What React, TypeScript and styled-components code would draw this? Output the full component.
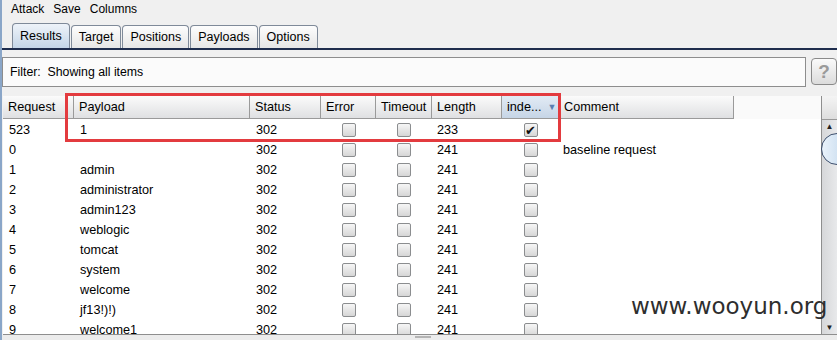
import styled, { createGlobalStyle } from "styled-components"

const Global = createGlobalStyle`
  html, body { margin: 0; padding: 0; overflow: hidden; background: #f0f0f0; }
  body { font-family: "Liberation Sans", Arial, sans-serif; font-size: 12px; color: #000; }
`

// Styles
const Window = styled.div`
  position: relative;
  width: 837px;
  height: 340px;
  box-sizing: border-box;
  border-left: 2px solid #8aa6c8;
  background: #f0f0f0;
  display: flex;
  flex-direction: column;
  overflow: hidden;
`
const MenuBar = styled.div`
  height: 17px;
  display: flex;
  align-items: center;
  gap: 9px;
  padding-left: 9px;
  font-size: 12px;
`
const TabStrip = styled.div`
  display: flex;
  align-items: flex-end;
  margin-top: 5px;
  padding-left: 10px;
  height: 26px;
  border-bottom: 2px solid #1f2d4d;
`
const Tab = styled.div<{ $active?: boolean }>`
  height: ${p => (p.$active ? 25 : 23)}px;
  box-sizing: border-box;
  padding: 0 7px;
  margin-right: 1px;
  display: flex;
  align-items: center;
  border: 1px solid #7f8a99;
  border-bottom: none;
  border-radius: 4px 4px 0 0;
  background: ${p =>
    p.$active
      ? "linear-gradient(#eef3f9, #c5d6e8)"
      : "linear-gradient(#fdfdfd, #e6e6e6)"};
  font-size: 12.5px;
`
const FilterRow = styled.div`
  display: flex;
  align-items: center;
  gap: 5px;
  margin-top: 6px;
  height: 31px;
`
const FilterBox = styled.div`
  width: 804px;
  height: 30px;
  box-sizing: border-box;
  border: 1px solid #8d8d8d;
  background: #fbfbfb;
  display: flex;
  align-items: center;
  padding-left: 7px;
  font-size: 12.3px;
  white-space: pre;
`
const HelpButton = styled.div`
  width: 26px;
  height: 27px;
  box-sizing: border-box;
  border: 1px solid #8a8a8a;
  border-radius: 4px;
  background: linear-gradient(#fafafa, #dcdcdc);
  color: #9a9a9a;
  font-size: 19px;
  font-weight: bold;
  display: flex;
  align-items: center;
  justify-content: center;
`
const TableArea = styled.div`
  flex: 1;
  display: flex;
  margin-top: 9px;
  margin-left: 1px;
  background: #fff;
  border-bottom: 1px solid #8e8e8e;
  overflow: hidden;
`
const TableBody = styled.div`
  flex: 1;
  overflow: hidden;
`
const cols = "71px 176px 71px 55px 56px 70px 57px 175px"
const HeaderRow = styled.div`
  display: grid;
  grid-template-columns: ${cols};
  height: 23px;
  margin-bottom: 1px;
  background: #fafafa;
`
const HeadCell = styled.div<{ $sorted?: boolean }>`
  display: flex;
  align-items: center;
  gap: 6px;
  padding: 0 5px;
  box-sizing: border-box;
  border-right: 1px solid #9a9a9a;
  border-bottom: 1px solid #9a9a9a;
  background: ${p =>
    p.$sorted
      ? "linear-gradient(#e2ebf5, #c6d5e6)"
      : "linear-gradient(#fbfbfb, #dfe0e2)"};
  font-size: 12.7px;
  white-space: nowrap;
`
const SortArrow = styled.span`
  color: #5b7fb0;
  font-size: 9px;
`
const Row = styled.div`
  display: grid;
  grid-template-columns: ${cols};
  height: 20px;
  align-items: center;
`
const Cell = styled.div<{ $pad?: number; $center?: boolean }>`
  padding-left: ${p => p.$pad ?? 0}px;
  display: flex;
  justify-content: ${p => (p.$center ? "center" : "flex-start")};
  font-size: 12.7px;
  white-space: nowrap;
`
const Check = styled.div`
  width: 14px;
  height: 14px;
  box-sizing: border-box;
  border: 1px solid #8b8d8f;
  border-radius: 2px;
  background: linear-gradient(#f6f6f6, #d6d6d6);
  display: flex;
  align-items: center;
  justify-content: center;
  font-family: "DejaVu Sans", sans-serif;
  font-size: 13px;
  line-height: 1;
  color: #111;
`
const ScrollBar = styled.div`
  width: 15px;
  display: flex;
  flex-direction: column;
  border-left: 1px solid #8e8e8e;
`
const ScrollCorner = styled.div`
  height: 23px;
  background: linear-gradient(#f4f4f4, #dedede);
  border-bottom: 1px solid #9a9a9a;
`
const ScrollTrack = styled.div`
  flex: 1;
  background: linear-gradient(90deg, #d6d7d9, #e8e9eb);
  display: flex;
  flex-direction: column;
  align-items: center;
`
const ScrollArrow = styled.div`
  font-size: 8px;
  color: #222;
  height: 13px;
  line-height: 13px;
`
const Thumb = styled.div`
  width: 30px;
  height: 30px;
  margin-left: 15px;
  border-radius: 50%;
  border: 1px solid #3c4e6c;
  background: linear-gradient(90deg, #eaf3fb, #bcd3ea);
`
const Spacer = styled.div`
  flex: 1;
`
const BottomStrip = styled.div`
  height: 5px;
  display: flex;
  justify-content: center;
  padding-left: 6px;
  background: #ececec;
`
const Grip = styled.div`
  width: 16px;
  height: 2px;
  margin-top: 1px;
  background: #b4b4b4;
`
const Highlight = styled.div`
  position: absolute;
  left: 63px;
  top: 93px;
  width: 496px;
  height: 49px;
  box-sizing: border-box;
  border: 3px solid #e33b3f;
  pointer-events: none;
`
const Watermark = styled.div`
  position: absolute;
  left: 629px;
  top: 293px;
  font-family: "DejaVu Sans", Verdana, sans-serif;
  font-size: 23px;
  color: #2e2e2e;
`

const headers = ["Request", "Payload", "Status", "Error", "Timeout", "Length", "inde...", "Comment"]

const rows: [string, string, string, string, boolean, string][] = [
  ["523", "1", "302", "233", true, ""],
  ["0", "", "302", "241", false, "baseline request"],
  ["1", "admin", "302", "241", false, ""],
  ["2", "administrator", "302", "241", false, ""],
  ["3", "admin123", "302", "241", false, ""],
  ["4", "weblogic", "302", "241", false, ""],
  ["5", "tomcat", "302", "241", false, ""],
  ["6", "system", "302", "241", false, ""],
  ["7", "welcome", "302", "241", false, ""],
  ["8", "jf13!)!)", "302", "241", false, ""],
  ["9", "welcome1", "302", "241", false, ""],
]

const App: React.FC = () => {
  return (
    <>
      <Global />
      <Window>
        <MenuBar>
          <span>Attack</span>
          <span>Save</span>
          <span>Columns</span>
        </MenuBar>
        <TabStrip>
          <Tab $active>Results</Tab>
          <Tab>Target</Tab>
          <Tab>Positions</Tab>
          <Tab>Payloads</Tab>
          <Tab>Options</Tab>
        </TabStrip>
        <FilterRow>
          <FilterBox>{"Filter:  Showing all items"}</FilterBox>
          <HelpButton>?</HelpButton>
        </FilterRow>
        <TableArea>
          <TableBody>
            <HeaderRow>
              {headers.map(h =>
                h === "inde..." ? (
                  <HeadCell key={h} $sorted>
                    {h}
                    <SortArrow>▼</SortArrow>
                  </HeadCell>
                ) : (
                  <HeadCell key={h}>{h}</HeadCell>
                )
              )}
            </HeaderRow>
            {rows.map(([req, payload, status, len, idx, comment]) => (
              <Row key={req}>
                <Cell $pad={6}>{req}</Cell>
                <Cell $pad={6}>{payload}</Cell>
                <Cell $pad={6}>{status}</Cell>
                <Cell $center><Check /></Cell>
                <Cell $center><Check /></Cell>
                <Cell $pad={5}>{len}</Cell>
                <Cell $center><Check>{idx ? "✔" : ""}</Check></Cell>
                <Cell $pad={4}>{comment}</Cell>
              </Row>
            ))}
          </TableBody>
          <ScrollBar>
            <ScrollCorner />
            <ScrollTrack>
              <ScrollArrow>▲</ScrollArrow>
              <Thumb />
              <Spacer />
              <ScrollArrow>▼</ScrollArrow>
            </ScrollTrack>
          </ScrollBar>
        </TableArea>
        <BottomStrip>
          <Grip />
        </BottomStrip>
        <Highlight />
        <Watermark>www.wooyun.org</Watermark>
      </Window>
    </>
  )
}

export default App
